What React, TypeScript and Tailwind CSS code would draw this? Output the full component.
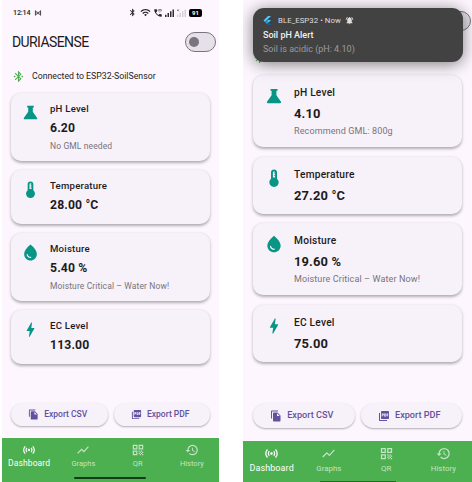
import type { ComponentType } from "react";
import {
  MdBluetooth,
  MdBluetoothConnected,
  MdBolt,
  MdFileCopy,
  MdHistory,
  MdNotificationsActive,
  MdPictureAsPdf,
  MdQrCode,
  MdSensors,
  MdShowChart,
  MdWaterDrop,
  MdWifi,
  MdWifiCalling3,
} from "react-icons/md";

type Icon = ComponentType<{ className?: string }>;
type Reading = { icon: Icon; title: string; value: string; note?: string };

const small = {
  list: "flex flex-col gap-[9px] px-[9px]",
  tall: "h-[68px]",
  short: "h-[54px]",
  card: "flex rounded-[10px] bg-[#f7f1f9] pl-[10px] pt-2 shadow-[0_1.5px_3px_rgba(0,0,0,0.3)]",
  icon: "mt-[2px] size-[19px] shrink-0 text-[#079585]",
  text: "ml-[10px] flex flex-col whitespace-nowrap",
  title: "h-4 text-[9.6px] leading-4 font-medium tracking-[0.22px] text-[#1d1b20]",
  value: "mt-px h-5 text-[12.2px] leading-[21px] font-bold tracking-[0.15px] text-[#1d1b20]",
  note: "mt-px h-[14px] text-[8.5px] leading-[14px] tracking-[0.12px] text-[#77747a]",
  actions: "flex gap-[6px] px-[9px]",
  button:
    "flex h-[23px] flex-1 items-center justify-center gap-[5px] rounded-full bg-[#f7f1f9] pr-[3px] text-[8.5px] font-medium whitespace-nowrap text-[#6250a0] shadow-[0_1px_2px_rgba(0,0,0,0.3)]",
  buttonIcon: "size-[11px]",
  nav: "relative flex h-[44px] bg-[#4caf50] text-white",
  tab: "flex flex-1 flex-col items-center pt-[5px]",
  tabIcon: "size-[14px]",
  active: "text-[8.5px] leading-[13px] tracking-[0.1px]",
  label: "text-[7.5px] leading-[14px]",
};

const large: typeof small = {
  list: "flex flex-col gap-[9.5px] px-[10px]",
  tall: "h-[72px]",
  short: "h-[57px]",
  card: "flex rounded-[10px] bg-[#f7f1f9] pl-[10.5px] pt-[9px] shadow-[0_1.5px_3px_rgba(0,0,0,0.3)]",
  icon: "mt-[2px] size-[20px] shrink-0 text-[#079585]",
  text: "ml-[10.5px] flex flex-col whitespace-nowrap",
  title: "h-[18px] text-[10.2px] leading-[18px] font-medium tracking-[0.22px] text-[#1d1b20]",
  value: "mt-px h-[21px] text-[12.9px] leading-[21px] font-bold tracking-[0.15px] text-[#1d1b20]",
  note: "h-[15px] text-[9px] leading-[15px] tracking-[0.12px] text-[#77747a]",
  actions: "flex gap-[6px] px-[10px]",
  button:
    "flex h-[25px] flex-1 items-center justify-center gap-[5px] rounded-full bg-[#f7f1f9] pr-[4px] text-[9.1px] font-medium whitespace-nowrap text-[#6250a0] shadow-[0_1px_2px_rgba(0,0,0,0.3)]",
  buttonIcon: "size-[12px]",
  nav: "relative flex h-[41px] overflow-hidden bg-[#4caf50] text-white",
  tab: "flex flex-1 flex-col items-center pt-[5px]",
  tabIcon: "size-[15px]",
  active: "text-[9px] leading-[14px] tracking-[0.1px]",
  label: "text-[7.9px] leading-[15px]",
};

function Flask({ className }: { className?: string }) {
  return (
    <svg viewBox="0 0 24 24" className={className} fill="currentColor">
      <path d="M7.8 3.6h8.4v2.2h-1.3v5.4l5.3 7.3c.8 1.1.2 2.1-1 2.1H4.8c-1.2 0-1.8-1-1-2.1l5.3-7.3V5.8H7.8z" />
    </svg>
  );
}

function Thermometer({ className }: { className?: string }) {
  return (
    <svg viewBox="0 0 24 24" className={className} fill="currentColor">
      <path d="M15.6 12.9V5.4a3.6 3.6 0 0 0-7.2 0v7.5a5.6 5.6 0 1 0 7.2 0zM10.7 11.5V5.4a1.3 1.3 0 0 1 2.6 0h-1.1v1.1h1.1v1.8h-1.1v1.1h1.1v2.1z" />
    </svg>
  );
}

function Readings({ s, items }: { s: typeof small; items: Reading[] }) {
  return (
    <div className={s.list}>
      {items.map(({ icon: Glyph, title, value, note }) => (
        <section key={title} className={`${s.card} ${note ? s.tall : s.short}`}>
          <Glyph className={s.icon} />
          <div className={s.text}>
            <h2 className={s.title}>{title}</h2>
            <p className={s.value}>{value}</p>
            {note && <p className={s.note}>{note}</p>}
          </div>
        </section>
      ))}
    </div>
  );
}

function Actions({ s }: { s: typeof small }) {
  return (
    <div className={s.actions}>
      <button className={s.button}>
        <MdFileCopy className={s.buttonIcon} />
        Export CSV
      </button>
      <button className={s.button}>
        <MdPictureAsPdf className={s.buttonIcon} />
        Export PDF
      </button>
    </div>
  );
}

const tabs: { icon: Icon; label: string }[] = [
  { icon: MdSensors, label: "Dashboard" },
  { icon: MdShowChart, label: "Graphs" },
  { icon: MdQrCode, label: "QR" },
  { icon: MdHistory, label: "History" },
];

function Nav({ s, bar }: { s: typeof small; bar: string }) {
  return (
    <nav className={s.nav}>
      {tabs.map(({ icon: Glyph, label }, i) => (
        <div key={label} className={`${s.tab} ${i ? "text-[#c3e5c5]" : "text-white"}`}>
          <Glyph className={s.tabIcon} />
          <span className={i ? s.label : s.active}>{label}</span>
        </div>
      ))}
      <div className={bar} />
    </nav>
  );
}

function Toggle() {
  return (
    <div className="flex h-5 w-[31px] items-center rounded-full border-[1.5px] border-[#79747e] bg-[#e6e0e9] pl-[3px]">
      <div className="size-[10px] rounded-full bg-[#79747e]" />
    </div>
  );
}

function Signal({ faded }: { faded?: boolean }) {
  return (
    <svg viewBox="0 0 10 9" className={faded ? "h-[8px] w-[9px] text-[#d3cdd5]" : "h-[8px] w-[9px] text-[#252228]"} fill="currentColor">
      <path d="M0 6.5h1.6V9H0zM2.8 4.5h1.6V9H2.8zM5.6 2.5h1.6V9H5.6zM8.4 .5H10V9H8.4z" />
      {faded && <path d="M0 .5l2 2M2 .5l-2 2" stroke="#55505a" strokeWidth=".8" />}
    </svg>
  );
}

function StatusBar() {
  return (
    <div className="flex h-[25px] items-center pr-[17px] pl-[11px] text-[#252228]">
      <span className="w-[17px] text-[7.2px] leading-none font-medium tracking-[-0.15px] whitespace-nowrap">12:14</span>
      <svg viewBox="0 0 8 7" className="ml-[4px] h-[6px] w-[8px]" fill="none" stroke="currentColor" strokeWidth="1">
        <path d="M1 .5v6M7 .5v6M2.3 1.5c1 .8 1 3.2 0 4M5.7 1.5c-1 .8-1 3.2 0 4M3 3.5h2" />
      </svg>
      <div className="ml-auto flex items-center">
        <MdBluetooth className="size-[9px]" />
        <MdWifi className="ml-[3px] size-[11px]" />
        <MdWifiCalling3 className="ml-[2px] size-[10px]" />
        <div className="ml-[2px] flex gap-[3px]">
          <Signal />
          <Signal faded />
        </div>
        <span className="ml-[3px] flex h-[8px] w-[13px] items-center justify-center rounded-[2px] bg-black text-[6px] leading-none font-bold text-white">
          91
        </span>
      </div>
    </div>
  );
}

function Flutter() {
  return (
    <svg viewBox="0 0 16 18" className="h-[9px] w-[8px]">
      <path d="M10 0h6L4 12 1 9z" fill="#54c5f8" />
      <path d="M10 8h6l-5 5-3-3z" fill="#54c5f8" />
      <path d="M5 13l3-3 3 3-3 3z" fill="#29a4ee" />
      <path d="M8 16l3-3 5 5h-6z" fill="#0b5fa5" />
    </svg>
  );
}

const left: Reading[] = [
  { icon: Flask, title: "pH Level", value: "6.20", note: "No GML needed" },
  { icon: Thermometer, title: "Temperature", value: "28.00 °C" },
  { icon: MdWaterDrop, title: "Moisture", value: "5.40 %", note: "Moisture Critical – Water Now!" },
  { icon: MdBolt, title: "EC Level", value: "113.00" },
];

const right: Reading[] = [
  { icon: Flask, title: "pH Level", value: "4.10", note: "Recommend GML: 800g" },
  { icon: Thermometer, title: "Temperature", value: "27.20 °C" },
  { icon: MdWaterDrop, title: "Moisture", value: "19.60 %", note: "Moisture Critical – Water Now!" },
  { icon: MdBolt, title: "EC Level", value: "75.00" },
];

export default function App() {
  return (
    <div className="flex h-[482px] w-[472px] justify-between overflow-hidden bg-white pl-[2px] font-['Roboto','Liberation_Sans',sans-serif]">
      <main className="flex h-full w-[217px] flex-col bg-[#fdf6fe]">
        <StatusBar />
        <header className="flex h-[34px] items-center justify-between pr-[3px] pl-[10px]">
          <h1 className="text-[14px] leading-none tracking-[-0.6px] text-[#1d1b20]">DURIASENSE</h1>
          <Toggle />
        </header>
        <div className="flex h-[34px] items-center gap-[7px] pl-[10px]">
          <MdBluetoothConnected className="size-[13px] text-[#4caf50]" />
          <span className="pt-px text-[8.75px] whitespace-nowrap text-[#1d1b20]">Connected to ESP32-SoilSensor</span>
        </div>
        <Readings s={small} items={left} />
        <div className="mt-auto mb-3">
          <Actions s={small} />
        </div>
        <Nav s={small} bar="absolute bottom-[3px] left-[72px] h-[2px] w-[72px] rounded-full bg-[#163b19]" />
      </main>

      <main className="relative flex h-full w-[229px] flex-col overflow-hidden bg-[#fdf6fe]">
        <div className="flex h-[75px] flex-col">
          <div className="mt-[11px] mr-px self-end">
            <Toggle />
          </div>
          <MdBluetoothConnected className="mt-[20px] ml-[10px] size-[13px] text-[#4caf50]" />
        </div>
        <Readings s={large} items={right} />
        <div className="mt-auto mb-[13px]">
          <Actions s={large} />
        </div>
        <Nav s={large} bar="absolute bottom-0 left-[77px] h-px w-[76px] bg-[#256b2a]" />
        <aside className="absolute top-2 left-[10px] flex h-[54px] w-[210px] flex-col rounded-[11px] bg-[#424242] pt-[5px] pl-[10px] whitespace-nowrap shadow-[0_2px_16px_rgba(0,0,0,0.5)]">
          <div className="flex h-[15px] items-center text-[7.8px] tracking-[0.05px] text-[#dedede]">
            <Flutter />
            <span className="ml-[7px]">BLE_ESP32 • Now</span>
            <MdNotificationsActive className="ml-[4px] size-[9px]" />
          </div>
          <p className="text-[9px] leading-[14px] font-medium text-[#f0f0f0]">Soil pH Alert</p>
          <p className="text-[9px] leading-[14px] text-[#9b9b9b]">Soil is acidic (pH: 4.10)</p>
        </aside>
      </main>
    </div>
  );
}
